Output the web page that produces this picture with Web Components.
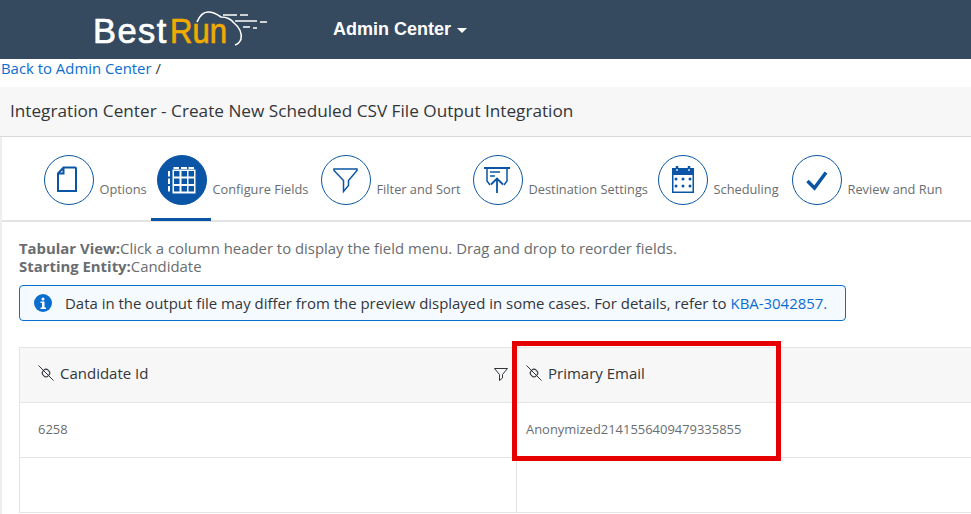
<!DOCTYPE html>
<html lang="en">
<head>
<meta charset="utf-8">
<title>Integration Center</title>
<style>
  html, body { margin: 0; height: 514px; overflow: hidden; background: #fff; }
  body { font-family: "Open Sans", "Liberation Sans", sans-serif; color: #32363a; }
</style>
</head>
<body>
<app-page>
  <app-header slot="header" menu="Admin Center"></app-header>
  <back-link slot="crumb">Back to Admin Center</back-link>
  <title-bar slot="title">Integration Center - Create New Scheduled CSV File Output Integration</title-bar>
  <step-bar slot="steps">
    <step-item icon="doc" w="113">Options</step-item>
    <step-item icon="grid" w="164" active>Configure Fields</step-item>
    <step-item icon="funnel" w="152">Filter and Sort</step-item>
    <step-item icon="upload" w="185">Destination Settings</step-item>
    <step-item icon="calendar" w="134">Scheduling</step-item>
    <step-item icon="check" w="150">Review and Run</step-item>
  </step-bar>
  <view-info slot="info" view="Click a column header to display the field menu. Drag and drop to reorder fields." entity="Candidate"></view-info>
  <info-strip slot="strip">Data in the output file may differ from the preview displayed in some cases. For details, refer to <a href="#">KBA-3042857.</a></info-strip>
  <preview-grid slot="grid"></preview-grid>
</app-page>

<script>
const ICONS = {
  doc: `<path d="M19.500 12.500h11.500a1 1 0 0 1 1 1v22.500H14V18.500z M19.500 12.500v6H14" fill="none" stroke="currentColor" stroke-width="2"/>`,
  grid: `<rect x="15.500" y="14.500" width="23" height="24" fill="#fff"/><path d="M16.500 12h5.500v2h-5.500zM24 12h6v2h-6zM31.500 12h5.500v2h-5.500zM11 16h2v5.500h-2zM11 23.500h2v5.500h-2zM11 31h2v5.500h-2z" fill="#fff"/><g fill="#0a55a5"><rect x="17" y="16" width="5.500" height="5.500"/><rect x="24.500" y="16" width="5.500" height="5.500"/><rect x="31.500" y="16" width="5.500" height="5.500"/><rect x="17" y="23.500" width="5.500" height="5.500"/><rect x="24.500" y="23.500" width="5.500" height="5.500"/><rect x="31.500" y="23.500" width="5.500" height="5.500"/><rect x="17" y="31" width="5.500" height="5.500"/><rect x="24.500" y="31" width="5.500" height="5.500"/><rect x="31.500" y="31" width="5.500" height="5.500"/></g>`,
  funnel: `<path d="M13 14h23v1.500l-8.500 10v5l-5 6v-11L13 15.500z" fill="none" stroke="currentColor" stroke-width="1.500"/>`,
  upload: `<g fill="none" stroke="currentColor"><path d="M11 13h26" stroke-width="2"/><path d="M14 13v13l3 4M34 13v13l-3 4" stroke-width="1.500"/><path d="M17 17h10M17 21h5" stroke-width="1.500"/><path d="M24 38V24M18 29.500l6-6 6 6" stroke-width="1.800"/></g>`,
  calendar: `<path fill="currentColor" fill-rule="evenodd" d="M14 13h22v25H14zM15.500 20v16.500h19V20z"/><path d="M19 11v5M31 11v5" stroke="currentColor" stroke-width="2.500"/><path d="M19 14v2M31 14v2" stroke="#fff" stroke-width="1.200"/><g fill="currentColor"><circle cx="18" cy="24" r="1.500"/><circle cx="25" cy="24" r="1.500"/><circle cx="32" cy="24" r="1.500"/><circle cx="18" cy="31" r="1.500"/><circle cx="25" cy="31" r="1.500"/><circle cx="32" cy="31" r="1.500"/></g>`,
  check: `<path d="M15.500 26l7 7L34 17.500" fill="none" stroke="currentColor" stroke-width="3.500"/>`
};

// small helper, every element here is just markup + style
const shadow = (el, html) => {
  el.attachShadow({ mode: "open" }).innerHTML = html;
};

class AppPage extends HTMLElement {
  connectedCallback() {
    shadow(this, /*HTML*/ `
      <style>
        :host { display: block; width: 971px; height: 514px; overflow: hidden; }
        .lower { border-left: 2px solid #eeeeee; height: 378px; }
        .body { padding: 17px 0 0 17px; }
        .strip { margin-top: 10px; }
        .grid { margin-top: 26px; }
      </style>
      <slot name="header"></slot>
      <slot name="crumb"></slot>
      <slot name="title"></slot>
      <div class="lower">
        <slot name="steps"></slot>
        <div class="body">
          <slot name="info"></slot>
          <div class="strip"><slot name="strip"></slot></div>
          <div class="grid"><slot name="grid"></slot></div>
        </div>
      </div>
    `);
  }
}

class AppHeader extends HTMLElement {
  connectedCallback() {
    shadow(this, /*HTML*/ `
      <style>
        :host { display: flex; align-items: center; height: 59px; background: #364a5f; }
        .logo { position: relative; margin-left: 93px; width: 200px; height: 59px; padding-top: 2px; box-sizing: border-box; font: 34.500px/59px "Liberation Sans", sans-serif; color: #fff; letter-spacing: 1.400px; -webkit-text-stroke: 0.700px currentColor; white-space: nowrap; }
        .logo b { display: inline-block; font-weight: 400; color: #f0ab00; margin-left: 2px; letter-spacing: 0; transform: scaleX(0.9); transform-origin: left center; }
        .logo svg { position: absolute; left: 0; top: 0; }
        .menu { margin-left: 40px; font: 700 18px "Liberation Sans", sans-serif; color: #fff; display: flex; align-items: center; gap: 6px; }
        .caret { width: 0; height: 0; border: 5px solid transparent; border-top-color: #fff; border-bottom: 0; margin-top: 2px; }
      </style>
      <div class="logo">Best<b>Run</b>
        <svg width="200" height="59" viewBox="93 0 200 59" fill="none" stroke="#fff">
          <path d="M197 22c3-7 7-10 11-10 5 0 9 2 13 5 5 0 10 2 13 6 5 4 8 10 7 16-1 3-3 5-6 6" stroke-width="1.600"/>
          <path d="M223 15h14M240 15h8M235 21h22M260 22h7M243 27h7M253 28h4" stroke-width="1.500"/>
        </svg>
      </div>
      <div class="menu">${this.getAttribute("menu")}<span class="caret"></span></div>
    `);
  }
}

class BackLink extends HTMLElement {
  connectedCallback() {
    shadow(this, /*HTML*/ `
      <style>
        :host { display: block; height: 28px; line-height: 18px; font-size: 14.900px; color: #32363a; padding-left: 1px; }
        a { color: #0a6ed1; text-decoration: none; }
      </style>
      <a href="#"><slot></slot></a> /
    `);
  }
}

class TitleBar extends HTMLElement {
  connectedCallback() {
    shadow(this, /*HTML*/ `
      <style>
        :host { display: block; height: 50px; box-sizing: border-box; line-height: 48px; padding-left: 10px; font-size: 17.200px; color: #32363a; background: #f7f7f7; border-bottom: 1px solid #d9d9d9; }
      </style>
      <slot></slot>
    `);
  }
}

class StepBar extends HTMLElement {
  connectedCallback() {
    shadow(this, /*HTML*/ `
      <style>
        :host { display: flex; height: 85px; box-sizing: border-box; padding-left: 36px; border-bottom: 2px solid #e3e3e3; }
      </style>
      <slot></slot>
    `);
  }
}

class StepItem extends HTMLElement {
  connectedCallback() {
    const active = this.hasAttribute("active");
    shadow(this, /*HTML*/ `
      <style>
        :host { display: block; flex: none; width: ${this.getAttribute("w")}px; height: 84px; position: relative; box-sizing: border-box; padding: 18px 0 0 6px; }
        .row { display: flex; align-items: flex-start; gap: 5.500px; }
        .circle { flex: none; width: 50px; height: 50px; box-sizing: border-box; border-radius: 50%; color: #0a55a5; border: 1.500px solid #0a55a5; background: #fff; }
        .circle.on { background: #0a55a5; color: #fff; }
        svg { display: block; margin: -1.500px; }
        .label { font-size: 12.800px; color: #6a6d70; margin-top: 25px; line-height: 18px; white-space: nowrap; }
        .bar { position: absolute; left: 0; bottom: 0; width: 60px; height: 3px; background: #0a55a5; }
      </style>
      <div class="row">
        <div class="circle ${active ? "on" : ""}"><svg width="50" height="50" viewBox="0 0 50 50">${ICONS[this.getAttribute("icon")]}</svg></div>
        <div class="label"><slot></slot></div>
      </div>
      ${active ? '<div class="bar"></div>' : ""}
    `);
  }
}

class ViewInfo extends HTMLElement {
  connectedCallback() {
    shadow(this, /*HTML*/ `
      <style>
        :host { display: block; font-size: 14.900px; line-height: 18px; color: #6a6d70; }
        b { font-weight: 700; }
      </style>
      <div><b>Tabular View:</b>${this.getAttribute("view")}</div>
      <div><b>Starting Entity:</b>${this.getAttribute("entity")}</div>
    `);
  }
}

class InfoStrip extends HTMLElement {
  connectedCallback() {
    shadow(this, /*HTML*/ `
      <style>
        :host { display: flex; align-items: center; gap: 13px; width: 827px; height: 36px; box-sizing: border-box; padding-left: 14px; border: 1px solid #0a6ed1; border-radius: 4px; background: #f5faff; font-size: 14.950px; color: #32363a; white-space: nowrap; }
        svg { flex: none; }
        ::slotted(a) { color: #0a6ed1; text-decoration: none; }
      </style>
      <svg width="18" height="18" viewBox="0 0 18 18"><circle cx="9" cy="9" r="9" fill="#0a6ed1"/><rect x="7.500" y="3.500" width="3" height="3" rx="1.500" fill="#fff"/><path d="M6.500 7.500h4v6h1.500v1.500H6.500v-1.500H8V9H6.500z" fill="#fff"/></svg>
      <span><slot></slot></span>
    `);
  }
}

const PIN = `<svg width="16" height="16" viewBox="0 0 16 16" fill="none" stroke="#32363a" stroke-width="1"><path d="M0.500 0.500l15 15"/><rect x="4.500" y="4.500" width="7" height="7" rx="3" transform="rotate(45 8 8)"/></svg>`;

class PreviewGrid extends HTMLElement {
  connectedCallback() {
    shadow(this, /*HTML*/ `
      <style>
        :host { display: block; position: relative; width: 953px; }
        .table { display: grid; grid-template-columns: 496px 1fr; grid-auto-rows: 55px; border-left: 1px solid #e5e5e5; border-top: 1px solid #e5e5e5; }
        .c { border-bottom: 1px solid #e5e5e5; display: flex; align-items: center; padding-left: 18px; padding-bottom: 2px; box-sizing: border-box; font-size: 12.950px; color: #6a6d70; }
        .c:nth-child(even) { border-left: 1px solid #e5e5e5; padding-left: 9px; }
        .h { background: #f7f7f7; font-size: 15px; color: #32363a; gap: 6px; position: relative; padding-bottom: 5px; }
        .h > svg.f { position: absolute; right: 8px; top: 19px; }
        .mark { position: absolute; left: 493px; top: -6px; width: 269px; height: 120px; box-sizing: border-box; border: 5px solid #e60000; }
      </style>
      <div class="table">
        <div class="c h">${PIN}<span>Candidate Id</span><svg class="f" width="14" height="14" viewBox="0 0 14 14" fill="none" stroke="#32363a"><path d="M.5 1.500h13L8.500 7.500v3.500l-3 2.500V7.500z"/></svg></div>
        <div class="c h">${PIN}<span>Primary Email</span></div>
        <div class="c">6258</div>
        <div class="c">Anonymized2141556409479335855</div>
        <div class="c"></div>
        <div class="c"></div>
      </div>
      <div class="mark"></div>
    `);
  }
}

customElements.define("app-page", AppPage);
customElements.define("app-header", AppHeader);
customElements.define("back-link", BackLink);
customElements.define("title-bar", TitleBar);
customElements.define("step-bar", StepBar);
customElements.define("step-item", StepItem);
customElements.define("view-info", ViewInfo);
customElements.define("info-strip", InfoStrip);
customElements.define("preview-grid", PreviewGrid);
</script>
</body>
</html>
